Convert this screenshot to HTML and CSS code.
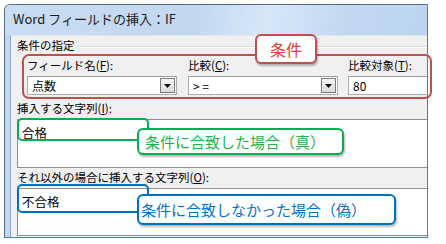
FILE: index.html
```html
<!DOCTYPE html>
<html lang="ja">
<head>
<meta charset="utf-8">
<title>Word フィールドの挿入：IF</title>
<link rel="stylesheet" href="styles.css">
</head>
<body>
<div class="page">
  <div class="window">
    <div class="titlebar">Word フィールドの挿入：IF</div>
    <div class="frame">
      <div class="content">
        <div class="group">
          <div class="group-title"><span>条件の指定</span><span class="rule"></span></div>
          <div class="fields">
            <div class="field f1">
              <div class="flabel">フィールド名(<u>F</u>):</div>
              <div class="combo"><span class="val">点数</span><span class="btn"><svg width="7" height="4" viewBox="0 0 7 4"><path d="M0 0H7L3.5 4Z" fill="#111"/></svg></span></div>
            </div>
            <div class="field f2">
              <div class="flabel">比較(<u>C</u>):</div>
              <div class="combo"><span class="val">&gt; =</span><span class="btn"><svg width="7" height="4" viewBox="0 0 7 4"><path d="M0 0H7L3.5 4Z" fill="#111"/></svg></span></div>
            </div>
            <div class="field f3">
              <div class="flabel">比較対象(<u>T</u>):</div>
              <div class="input"><span class="val">80</span></div>
            </div>
          </div>
        </div>
        <div class="lbl">挿入する文字列(<u>I</u>):</div>
        <div class="textbox tb1">合格</div>
        <div class="lbl lbl2">それ以外の場合に挿入する文字列(<u>O</u>):</div>
        <div class="textbox tb2">不合格</div>
      </div>
    </div>
  </div>

  <div class="ann red-frame"></div>
  <div class="ann tag red-tag">条件</div>
  <div class="ann green-box"></div>
  <div class="ann tag green-tag">条件に合致した場合（真）</div>
  <div class="ann blue-box"></div>
  <div class="ann tag blue-tag">条件に合致しなかった場合（偽）</div>
</div>
</body>
</html>
```

FILE: styles.css
```css
* { box-sizing: border-box; }

html, body {
  margin: 0;
  padding: 0;
  background: #ffffff;
}

body {
  font-family: "Noto Sans CJK JP", "Noto Sans", sans-serif;
  color: #000;
}

.page {
  position: relative;
  width: 446px;
  height: 244px;
  padding: 4px 0 0 4px;
}

.window {
  width: 424px;
  height: 234px;
  display: flex;
  flex-direction: column;
  border-left: 1px solid #5b6b80;
  border-top: 1px solid #5b6b80;
  border-right: 1px solid #4a7ec0;
  border-bottom: 1px solid #4a7ec0;
  border-top-left-radius: 6px;
  background: #c4daf1;
  overflow: hidden;
}

.titlebar {
  height: 30px;
  flex: none;
  padding: 5px 0 0 8px;
  font-size: 13px;
  line-height: 18px;
  color: #1b1b1b;
  background: linear-gradient(100deg, #c9ddf3 0%, #c2d8f0 45%, #d7e7f8 62%, #c3d9f1 80%, #bcd4ee 100%);
  white-space: nowrap;
}

.frame {
  flex: 1;
  display: flex;
  padding-left: 5px;
  background: #c2d8f0;
  min-height: 0;
}

.content {
  flex: 1;
  display: flex;
  flex-direction: column;
  background: #f0f0f0;
  border-left: 1px solid #8fa6c2;
  border-top: 1px solid #dfe6ee;
  padding: 2px 0 0 6px;
  overflow: hidden;
  font-size: 11.5px;
  min-width: 0;
}

.group-title {
  display: flex;
  align-items: center;
  gap: 3px;
  height: 14px;
  line-height: 14px;
  white-space: nowrap;
}

.group-title .rule {
  flex: 1;
  height: 2px;
  border-top: 1px solid #d5dfe5;
  border-bottom: 1px solid #ffffff;
  margin-top: 4px;
}

.fields {
  display: flex;
  gap: 11px;
  padding: 6px 0 0 10px;
}

.field {
  display: flex;
  flex-direction: column;
  gap: 3px;
}

.f1 { width: 150px; }
.f2 { width: 150px; }
.f3 { flex: 1; margin-left: -1px; margin-right: -4px; }

.flabel {
  height: 15px;
  line-height: 15px;
  white-space: nowrap;
}

.combo, .input {
  height: 19px;
  display: flex;
  align-items: center;
  background: #fff;
  border: 1px solid #abadb3;
  border-top-color: #9a9ca3;
  padding-left: 4px;
  font-size: 12px;
}

.combo .val, .input .val {
  flex: 1;
  line-height: 17px;
  white-space: nowrap;
}

.combo .btn {
  width: 15px;
  height: 15px;
  margin-right: 1px;
  display: flex;
  align-items: center;
  justify-content: center;
  border: 1px solid #7a7a7a;
  background: linear-gradient(#f4f4f4, #dcdcdc);
}

.lbl {
  height: 15px;
  line-height: 15px;
  margin-top: 6px;
  white-space: nowrap;
}

.lbl2 {
  margin-top: 2px;
}

.textbox {
  margin-top: 3px;
  margin-right: -3px;
  background: #fff;
  border: 1px solid #8e8f8f;
  font-size: 12.5px;
  line-height: 16px;
  padding: 5px 0 0 4px;
}

.tb1 { height: 49px; }
.tb2 { height: 48px; }

u { text-decoration: underline; text-underline-offset: 1px; }

/* annotations drawn over the dialog */
.ann {
  position: absolute;
  border-radius: 6px;
}

.tag {
  background: #fff;
  font-size: 15px;
  white-space: nowrap;
  box-shadow: 1px 2px 2px rgba(0, 0, 0, 0.28);
  display: flex;
  align-items: center;
}

.red-frame {
  left: 22px;
  top: 54px;
  width: 410px;
  height: 45px;
  border: 2px solid #c0504d;
  border-radius: 7px;
}

.red-tag {
  left: 255px;
  top: 34px;
  width: 62px;
  height: 30px;
  border: 2px solid #c0504d;
  color: #e0403c;
  font-size: 16px;
  justify-content: center;
}

.green-box {
  left: 17px;
  top: 118px;
  width: 132px;
  height: 23px;
  border: 2px solid #00b050;
  border-radius: 5px;
}

.green-tag {
  left: 137px;
  top: 128px;
  width: 207px;
  height: 27px;
  border: 2px solid #00b050;
  color: #22b24c;
  padding-left: 6px;
}

.blue-box {
  left: 17px;
  top: 184px;
  width: 132px;
  height: 29px;
  border: 2px solid #0070c0;
  border-radius: 5px;
}

.blue-tag {
  left: 137px;
  top: 194px;
  width: 259px;
  height: 31px;
  border: 2px solid #0070c0;
  color: #0a6fc2;
  padding-left: 2px;
}
```
